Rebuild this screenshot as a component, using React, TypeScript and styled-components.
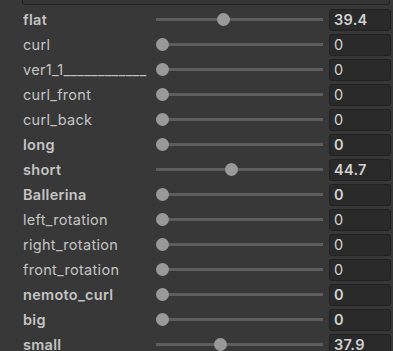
import React from "react";
import styled, { createGlobalStyle } from "styled-components";

const Global = createGlobalStyle`
  html, body { margin: 0; padding: 0; background: #383838; }
  body { font-family: Inter, "Noto Sans", sans-serif; }
`;

const Panel = styled.div`
  width: 393px;
  height: 351px;
  overflow: hidden;
  background: #383838;
  display: flex;
  flex-direction: column;
`;

const TopBox = styled.div`
  margin-left: 22px;
  width: 366px;
  height: 4px;
  border: 1px solid #242424;
  border-top: none;
  border-radius: 0 0 3px 3px;
  background: #353535;
  flex: none;
`;

const List = styled.div`
  display: flex;
  flex-direction: column;
  padding-top: 2px;
`;

const Row = styled.div`
  display: flex;
  align-items: center;
  height: 25px;
  padding-left: 23px;
`;

const Label = styled.span<{ $bold?: boolean }>`
  flex: none;
  width: 133px;
  font-size: 14.5px;
  letter-spacing: 0.3px;
  font-weight: ${(p) => (p.$bold ? 600 : 400)};
  color: #c4c4c4;
  white-space: nowrap;
  overflow: hidden;
`;

const Track = styled.div`
  flex: none;
  position: relative;
  width: 167px;
  height: 3px;
  margin-right: 6px;
  background: #5e5e5e;
`;

const Knob = styled.div`
  position: absolute;
  top: 50%;
  width: 13px;
  height: 13px;
  margin-left: -6.5px;
  margin-top: -6.5px;
  border-radius: 50%;
  background: #999999;
`;

const ValueBox = styled.div<{ $bold?: boolean }>`
  flex: none;
  width: 62px;
  height: 22px;
  box-sizing: border-box;
  border: 1px solid #212121;
  border-radius: 3px;
  background: #2a2a2a;
  color: #d2d2d2;
  font-size: 14.5px;
  letter-spacing: 0.3px;
  font-weight: ${(p) => (p.$bold ? 600 : 400)};
  line-height: 20px;
  padding-left: 4px;
`;

type Item = { name: string; value: number; bold?: boolean };

const items: Item[] = [
  { name: "flat", value: 39.4, bold: true },
  { name: "curl", value: 0 },
  { name: "ver1_1____________", value: 0 },
  { name: "curl_front", value: 0 },
  { name: "curl_back", value: 0 },
  { name: "long", value: 0, bold: true },
  { name: "short", value: 44.7, bold: true },
  { name: "Ballerina", value: 0, bold: true },
  { name: "left_rotation", value: 0 },
  { name: "right_rotation", value: 0 },
  { name: "front_rotation", value: 0 },
  { name: "nemoto_curl", value: 0, bold: true },
  { name: "big", value: 0, bold: true },
  { name: "small", value: 37.9, bold: true },
];

const KNOB_START = 6;
const KNOB_RANGE = 155;

export default function App() {
  return (
    <>
      <Global />
      <Panel>
        <TopBox />
        <List>
          {items.map((it) => (
            <Row key={it.name}>
              <Label $bold={it.bold}>{it.name}</Label>
              <Track>
                <Knob style={{ left: KNOB_START + (KNOB_RANGE * it.value) / 100 }} />
              </Track>
              <ValueBox $bold={it.bold}>{it.value}</ValueBox>
            </Row>
          ))}
        </List>
      </Panel>
    </>
  );
}
